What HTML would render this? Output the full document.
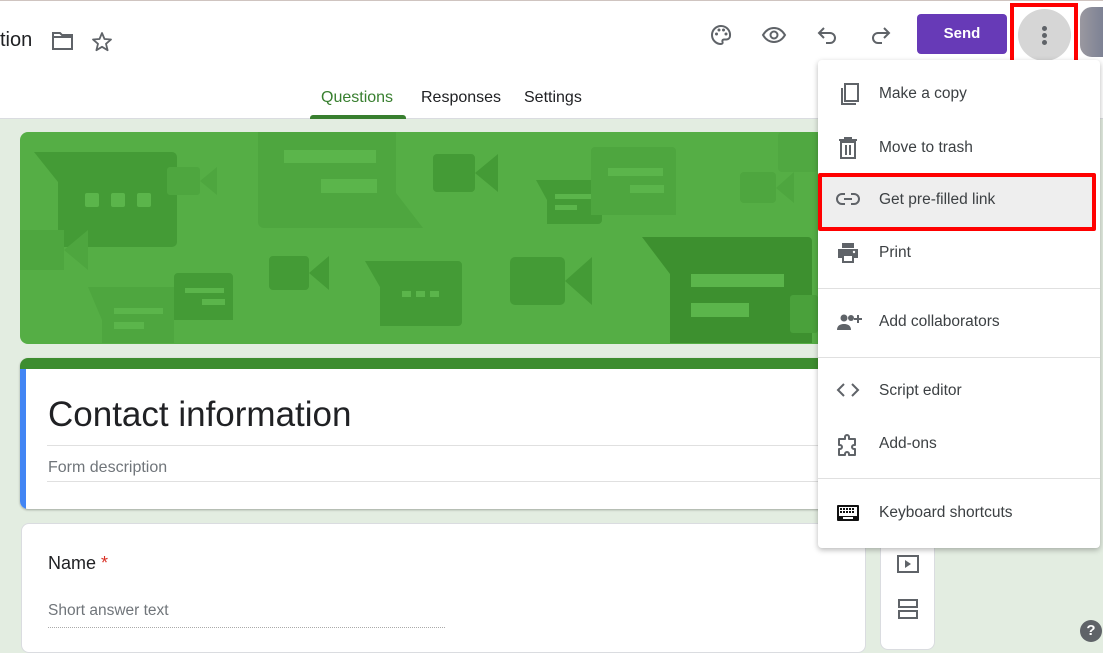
<!DOCTYPE html>
<html><head><meta charset="utf-8"><style>
*{margin:0;padding:0;box-sizing:border-box}
body{width:1103px;height:635px;overflow:hidden;background:#e3ede1;font-family:"Liberation Sans",Arial,sans-serif;position:relative;color:#202124}
.abs{position:absolute}
#top{left:0;top:0;width:1103px;height:119px;background:#fff;border-top:1px solid #cfc4c0;border-bottom:1px solid #dadce0}
.menu-t{font-size:15.5px;color:#3c4043;position:absolute;left:61px}
</style></head><body>
<div id="top" class="abs">
  <div class="abs" style="left:0;top:28px;font-size:20px;color:#202124">tion</div>
  <svg class="abs" style="left:51px;top:29px" width="24" height="22" viewBox="0 0 24 22"><path d="M2 3h7l2 2h10v14H2z" fill="none" stroke="#5f6368" stroke-width="2"/><path d="M2 7h19" stroke="#5f6368" stroke-width="2"/></svg>
  <svg class="abs" style="left:90px;top:29px" width="24" height="24" viewBox="0 0 24 24"><path d="M12 3l2.5 6 6.5.5-5 4.3 1.6 6.4L12 16.8 6.4 20.2 8 13.8 3 9.5l6.5-.5z" fill="none" stroke="#5f6368" stroke-width="1.8" stroke-linejoin="round"/></svg>
  <svg class="abs" style="left:709px;top:22px" width="24" height="24" viewBox="0 0 24 24"><path d="M12 3a9 9 0 0 0 0 18c1.5 0 2-1 1.5-2s0-2.5 1.5-2.5h2.5A3.5 3.5 0 0 0 21 13 9 9 0 0 0 12 3z" fill="none" stroke="#5f6368" stroke-width="2"/><circle cx="7.5" cy="11" r="1.5" fill="#5f6368"/><circle cx="10" cy="7" r="1.5" fill="#5f6368"/><circle cx="14.5" cy="7" r="1.5" fill="#5f6368"/><circle cx="17" cy="11" r="1.5" fill="#5f6368"/></svg>
  <svg class="abs" style="left:761px;top:22px" width="26" height="24" viewBox="0 0 26 24"><path d="M2 12c3-5 7-7 11-7s8 2 11 7c-3 5-7 7-11 7S5 17 2 12z" fill="none" stroke="#5f6368" stroke-width="2"/><circle cx="13" cy="12" r="3.5" fill="none" stroke="#5f6368" stroke-width="2"/></svg>
  <svg class="abs" style="left:816px;top:22px" width="24" height="24" viewBox="0 0 24 24"><path d="M8 5L3 10l5 5M3 10h11a5 5 0 0 1 0 10h-4" fill="none" stroke="#5f6368" stroke-width="2"/></svg>
  <svg class="abs" style="left:868px;top:22px" width="24" height="24" viewBox="0 0 24 24"><path d="M16 5l5 5-5 5M21 10H10a5 5 0 0 0 0 10h4" fill="none" stroke="#5f6368" stroke-width="2"/></svg>
  <div class="abs" style="left:917px;top:13px;width:90px;height:40px;background:#673ab7;border-radius:4px;color:#fff;font-weight:bold;font-size:15px;line-height:40px;text-align:center">Send</div>
  <div class="abs" style="left:1018px;top:8px;width:53px;height:52px;border-radius:50%;background:#d6d6d6"></div>
  <div class="abs" style="left:1042px;top:25px;width:5px;height:5px;border-radius:50%;background:#5f6368"></div>
  <div class="abs" style="left:1042px;top:32px;width:5px;height:5px;border-radius:50%;background:#5f6368"></div>
  <div class="abs" style="left:1042px;top:39px;width:5px;height:5px;border-radius:50%;background:#5f6368"></div>
  <div class="abs" style="left:1010px;top:2px;width:68px;height:62px;border:4px solid #f00"></div>
  <div class="abs" style="left:1080px;top:6px;width:23px;height:50px;background:linear-gradient(90deg,#9a98a0,#7d8294);border-radius:12px 0 0 12px"></div>
  <div class="abs" style="left:321px;top:88px;font-size:16px;color:#387f2f">Questions</div>
  <div class="abs" style="left:310px;top:114px;width:96px;height:4px;background:#387f2f;border-radius:3px 3px 0 0"></div>
  <div class="abs" style="left:421px;top:88px;font-size:16px;color:#202124">Responses</div>
  <div class="abs" style="left:524px;top:88px;font-size:16px;color:#202124">Settings</div>
</div>

<!-- banner -->
<div class="abs" style="left:20px;top:132px;width:830px;height:212px;border-radius:8px;overflow:hidden;background:#55ae45">
<svg width="830" height="212" viewBox="20 132 830 212">
 <g fill="#449b36">
  <path d="M34 152h138a5 5 0 0 1 5 5v85a5 5 0 0 1-5 5H58V182z"/>
  <path d="M433 158a4 4 0 0 1 4-4h34a4 4 0 0 1 4 4v30a4 4 0 0 1-4 4h-34a4 4 0 0 1-4-4zM475 173l23-19v38z"/>
  <path d="M536 180h62a4 4 0 0 1 4 4v36a4 4 0 0 1-4 4h-51v-24z"/>
  <path d="M20 230h44v40H20zM64 250l24-20v40z" fill="#4ea63f"/>
  <path d="M269 260a4 4 0 0 1 4-4h32a4 4 0 0 1 4 4v26a4 4 0 0 1-4 4h-32a4 4 0 0 1-4-4zM309 273l20-17v34z"/>
  <path d="M365 261h93a4 4 0 0 1 4 4v57a4 4 0 0 1-4 4h-78v-39z"/>
  <path d="M510 262a5 5 0 0 1 5-5h45a5 5 0 0 1 5 5v38a5 5 0 0 1-5 5h-45a5 5 0 0 1-5-5zM565 281l27-24v48z"/>
  <path d="M174 277a4 4 0 0 1 4-4h51a4 4 0 0 1 4 4v43h12l-71 0z"/>
  <path d="M642 237h166a4 4 0 0 1 4 4v102H670V274z" fill="#3d902f"/>
 </g>
 <g fill="#4ea63f">
  <path d="M167 170a3 3 0 0 1 3-3h27a3 3 0 0 1 3 3v22a3 3 0 0 1-3 3h-27a3 3 0 0 1-3-3zM200 181l17-14v28z"/>
  <path d="M258 132h138v96h27H264a6 6 0 0 1-6-6z"/><path d="M396 193v35h27z"/>
  <path d="M591 151a4 4 0 0 1 4-4h77a4 4 0 0 1 4 4v64h16H591z"/>
  <path d="M740 176a4 4 0 0 1 4-4h28a4 4 0 0 1 4 4v23a4 4 0 0 1-4 4h-28a4 4 0 0 1-4-4zM776 188l18-16v31z"/>
  <path d="M88 287h86v56H102V320z"/>
  <rect x="790" y="295" width="28" height="38" rx="3" fill="#4aa13b"/>
  <rect x="778" y="132" width="40" height="40" rx="4" fill="#50a841"/>
 </g>
 <g fill="#5bb54b">
  <rect x="85" y="193" width="14" height="14" rx="2"/><rect x="111" y="193" width="14" height="14" rx="2"/><rect x="137" y="193" width="14" height="14" rx="2"/>
  <rect x="284" y="150" width="92" height="13"/><rect x="321" y="179" width="56" height="14"/>
  <rect x="608" y="168" width="55" height="8"/><rect x="630" y="185" width="34" height="8"/>
  <rect x="555" y="194" width="36" height="5"/><rect x="555" y="205" width="22" height="5"/>
  <rect x="114" y="308" width="49" height="6"/><rect x="114" y="322" width="30" height="7"/>
  <rect x="185" y="288" width="39" height="5"/><rect x="202" y="299" width="23" height="6"/>
  <rect x="402" y="291" width="9" height="6"/><rect x="416" y="291" width="9" height="6"/><rect x="430" y="291" width="9" height="6"/>
  <rect x="691" y="274" width="93" height="13"/><rect x="691" y="303" width="58" height="14"/>
 </g>
</svg></div>

<!-- title card -->
<div class="abs" style="left:20px;top:358px;width:830px;height:151px;background:#fff;border-radius:8px;overflow:hidden;box-shadow:0 1px 2px rgba(0,0,0,.3)">
  <div class="abs" style="left:0;top:0;width:830px;height:11px;background:#3d8d2f"></div>
  <div class="abs" style="left:0;top:11px;width:6px;height:140px;background:#4285f4"></div>
  <div class="abs" style="left:28px;top:37px;font-size:35px;color:#202124">Contact information</div>
  <div class="abs" style="left:27px;top:87px;width:803px;height:1px;background:#e0e0e0"></div>
  <div class="abs" style="left:28px;top:101px;font-size:16px;color:#70757a">Form description</div>
  <div class="abs" style="left:27px;top:123px;width:803px;height:1px;background:#e0e0e0"></div>
</div>

<!-- question card -->
<div class="abs" style="left:21px;top:523px;width:845px;height:130px;background:#fff;border-radius:8px;border:1px solid #dadce0">
  <div class="abs" style="left:26px;top:29px;font-size:18px;color:#202124">Name <span style="color:#d93025">*</span></div>
  <div class="abs" style="left:26px;top:78px;font-size:15.5px;color:#70757a">Short answer text</div>
  <div class="abs" style="left:26px;top:103px;width:397px;border-top:1px dotted #aaa"></div>
</div>

<!-- side toolbar -->
<div class="abs" style="left:880px;top:520px;width:55px;height:130px;background:#fff;border-radius:8px;border:1px solid #dadce0">
  <svg class="abs" style="left:15px;top:33px" width="24" height="20" viewBox="0 0 24 20"><rect x="2" y="2" width="20" height="16" fill="none" stroke="#5f6368" stroke-width="2"/><path d="M9 6v8l6-4z" fill="#5f6368"/></svg>
  <svg class="abs" style="left:15px;top:76px" width="24" height="24" viewBox="0 0 24 24"><rect x="3" y="3" width="18" height="7" fill="none" stroke="#5f6368" stroke-width="2"/><rect x="3" y="14" width="18" height="7" fill="none" stroke="#5f6368" stroke-width="2"/></svg>
</div>
<div class="abs" style="left:1080px;top:620px;width:22px;height:22px;border-radius:50%;background:#5f6368;color:#fff;font-weight:bold;font-size:15px;text-align:center;line-height:22px">?</div>

<!-- menu -->
<div class="abs" style="left:818px;top:60px;width:282px;height:488px;background:#fff;border-radius:4px;box-shadow:0 2px 6px rgba(0,0,0,.28)">
  <svg class="abs" style="left:18px;top:22px" width="24" height="26" viewBox="0 0 24 26"><path d="M6 6v16h14" fill="none" stroke="#5f6368" stroke-width="2"/><rect x="9" y="2" width="13" height="17" fill="none" stroke="#5f6368" stroke-width="2"/></svg>
  <div class="menu-t" style="top:25px">Make a copy</div>
  <svg class="abs" style="left:19px;top:77px" width="22" height="22" viewBox="0 0 22 22"><path d="M2 3h18M8 3V1h6v2M4 5h14v16H4z" fill="none" stroke="#5f6368" stroke-width="2"/><path d="M9 8v10M13 8v10" stroke="#5f6368" stroke-width="2"/></svg>
  <div class="menu-t" style="top:79px">Move to trash</div>
  <div class="abs" style="left:0;top:113px;width:278px;height:58px;background:#eeeeee;border:4px solid #f00;border-radius:2px"></div>
  <svg class="abs" style="left:18px;top:131px" width="24" height="16" viewBox="0 0 24 16"><path d="M9 3H6a5 5 0 0 0 0 10h3M15 3h3a5 5 0 0 1 0 10h-3M8 8h8" fill="none" stroke="#5f6368" stroke-width="2"/></svg>
  <div class="menu-t" style="top:131px">Get pre-filled link</div>
  <svg class="abs" style="left:18px;top:181px" width="24" height="24" viewBox="0 0 24 24"><path d="M6 2h12v5H6z M2 8h20v9h-4v5H6v-5H2z" fill="#5f6368"/><rect x="8" y="15" width="8" height="5" fill="#fff"/><circle cx="18" cy="11" r="1.2" fill="#fff"/></svg>
  <div class="menu-t" style="top:184px">Print</div>
  <div class="abs" style="left:0;top:228px;width:282px;height:1px;background:#e0e0e0"></div>
  <svg class="abs" style="left:18px;top:253px" width="26" height="18" viewBox="0 0 26 18"><circle cx="8" cy="5" r="3.5" fill="#5f6368"/><path d="M1 17c0-5 4-6 7-6s7 1 7 6z" fill="#5f6368"/><circle cx="15" cy="5" r="3" fill="#5f6368"/><path d="M22 2v8M18 6h8" stroke="#5f6368" stroke-width="2"/></svg>
  <div class="menu-t" style="top:253px">Add collaborators</div>
  <div class="abs" style="left:0;top:297px;width:282px;height:1px;background:#e0e0e0"></div>
  <svg class="abs" style="left:18px;top:322px" width="24" height="16" viewBox="0 0 24 16"><path d="M8 2L2 8l6 6M16 2l6 6-6 6" fill="none" stroke="#5f6368" stroke-width="2"/></svg>
  <div class="menu-t" style="top:322px">Script editor</div>
  <svg class="abs" style="left:18px;top:372px" width="24" height="26" viewBox="0 0 24 26"><path d="M3 7h6V5a2 2 0 0 1 4 0v2h6v6h-1a2 2 0 0 0 0 4h1v6h-6v-1a2 2 0 0 0-4 0v1H3v-6h1a2 2 0 0 0 0-4H3z" fill="none" stroke="#5f6368" stroke-width="2" stroke-linejoin="round"/></svg>
  <div class="menu-t" style="top:375px">Add-ons</div>
  <div class="abs" style="left:0;top:418px;width:282px;height:1px;background:#e0e0e0"></div>
  <svg class="abs" style="left:18px;top:444px" width="24" height="18" viewBox="0 0 24 18"><rect x="1" y="1" width="22" height="16" rx="1" fill="#111"/><rect x="3" y="3" width="18" height="9" fill="#fff"/><g fill="#111"><rect x="4" y="4" width="2" height="2"/><rect x="7" y="4" width="2" height="2"/><rect x="10" y="4" width="2" height="2"/><rect x="13" y="4" width="2" height="2"/><rect x="16" y="4" width="2" height="2"/><rect x="4" y="7" width="2" height="2"/><rect x="7" y="7" width="2" height="2"/><rect x="10" y="7" width="2" height="2"/><rect x="13" y="7" width="2" height="2"/><rect x="16" y="7" width="2" height="2"/></g><rect x="7" y="13" width="10" height="2" fill="#fff"/></svg>
  <div class="menu-t" style="top:444px">Keyboard shortcuts</div>
</div>
</body></html>
